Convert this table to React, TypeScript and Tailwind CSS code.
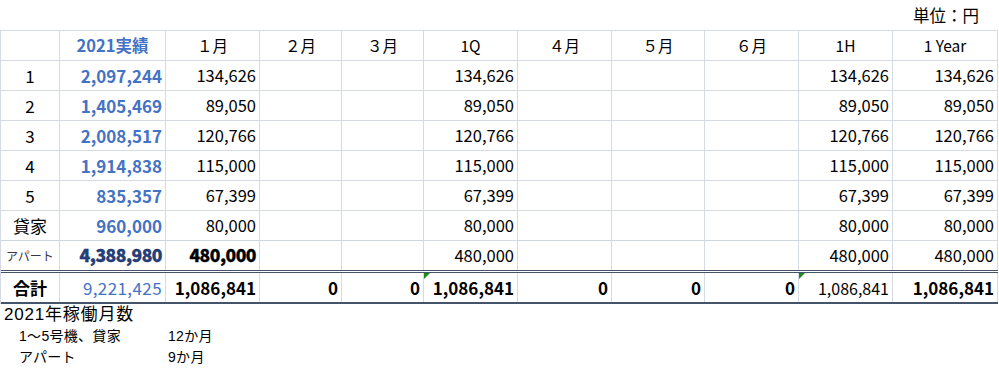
import { ReactNode } from "react";
import clsx from "clsx";

const widths = [
  "w-[59px]",
  "w-[106px]",
  "w-[94px]",
  "w-[82px]",
  "w-[82px]",
  "w-[94px]",
  "w-[94px]",
  "w-[93px]",
  "w-[94px]",
  "w-[94px]",
  "w-[105px]",
];

const headers = ["", "2021実績", "１月", "２月", "３月", "1Q", "４月", "５月", "６月", "1H", "1 Year"];

const rows = [
  { label: "1", base: "2,097,244", v: "134,626" },
  { label: "2", base: "1,405,469", v: "89,050" },
  { label: "3", base: "2,008,517", v: "120,766" },
  { label: "4", base: "1,914,838", v: "115,000" },
  { label: "5", base: "835,357", v: "67,399" },
  { label: "貸家", base: "960,000", v: "80,000" },
];

// columns whose bottom line under 貸家 is dashed
const dashedCols = [0, 1, 2, 3, 4, 6, 7, 8];

const Cell = ({
  i,
  children,
  className,
}: {
  i: number;
  children?: ReactNode;
  className?: string;
}) => (
  <div
    className={clsx(
      widths[i],
      "shrink-0 flex items-center border-r border-[#d5dae3] relative",
      className
    )}
  >
    {children}
  </div>
);

const Num = ({ children, className }: { children?: ReactNode; className?: string }) => (
  <span className={clsx("ml-auto pr-[3px]", className ?? "text-[16.5px]")}>{children}</span>
);

const Triangle = () => (
  <span className="absolute top-0 left-0 w-0 h-0 border-t-[6px] border-r-[6px] border-t-[#1a8a1a] border-r-transparent" />
);

export default function App() {
  return (
    <div className="w-[999px] h-[371px] bg-white text-black font-['Noto_Sans_CJK_JP','Noto_Sans',sans-serif] overflow-hidden">
      <div className="h-[30px] flex items-center justify-end pr-[20px] text-[16.5px]">単位：円</div>

      <div className="w-[998px] border-l border-t border-[#d5dae3]">
        {/* header */}
        <div className="flex h-[30px] border-b border-[#d5dae3]">
          {headers.map((h, i) => (
            <Cell key={i} i={i} className="justify-center">
              <span
                className={clsx(
                  i === 1 ? "font-bold text-[#4472c4] text-[16.5px]" : "text-[15.5px]"
                )}
              >
                {h}
              </span>
            </Cell>
          ))}
        </div>

        {rows.map((r, ri) => (
          <div key={r.label} className="flex h-[30px]">
            {headers.map((_, i) => (
              <Cell
                key={i}
                i={i}
                className={clsx(
                  "border-b",
                  ri === rows.length - 1 && dashedCols.includes(i)
                    ? "border-b-dashed border-b-[#cfd5df]"
                    : "border-b-[#d5dae3]",
                  i === 0 && "justify-center"
                )}
              >
                {i === 0 && <span className="text-[17px]">{r.label}</span>}
                {i === 1 && <Num className="font-bold text-[#4472c4] text-[17px]">{r.base}</Num>}
                {(i === 2 || i === 5 || i === 9 || i === 10) && <Num>{r.v}</Num>}
              </Cell>
            ))}
          </div>
        ))}

        {/* アパート */}
        <div className="flex h-[32px] border-b-[3px] border-double border-[#44546a]">
          {headers.map((_, i) => (
            <Cell key={i} i={i} className={clsx(i === 0 && "justify-center")}>
              {i === 0 && <span className="text-[12px] text-[#3a3346]">アパート</span>}
              {i === 1 && (
                <Num className="font-black text-[#22407e] text-[17.5px] tracking-[-0.5px] [-webkit-text-stroke:0.3px_#13264d]">
                  4,388,980
                </Num>
              )}
              {i === 2 && (
                <Num className="font-black text-[17.5px] tracking-[-0.5px] [-webkit-text-stroke:0.3px_#000]">
                  480,000
                </Num>
              )}
              {(i === 5 || i === 9 || i === 10) && <Num>480,000</Num>}
            </Cell>
          ))}
        </div>

        {/* 合計 */}
        <div className="flex h-[31px] border-b-2 border-[#44546a]">
          <Cell i={0} className="justify-center">
            <span className="font-bold text-[17px]">合計</span>
          </Cell>
          <Cell i={1}>
            <Num className="text-[#4472c4] text-[17px] tracking-[0.4px]">9,221,425</Num>
          </Cell>
          <Cell i={2}>
            <Num className="font-bold text-[17px]">1,086,841</Num>
          </Cell>
          <Cell i={3}>
            <Num className="font-bold text-[17px]">0</Num>
          </Cell>
          <Cell i={4}>
            <Num className="font-bold text-[17px]">0</Num>
          </Cell>
          <Cell i={5}>
            <Triangle />
            <Num className="font-bold text-[17px]">1,086,841</Num>
          </Cell>
          <Cell i={6}>
            <Num className="font-bold text-[17px]">0</Num>
          </Cell>
          <Cell i={7}>
            <Num className="font-bold text-[17px]">0</Num>
          </Cell>
          <Cell i={8}>
            <Num className="font-bold text-[17px]">0</Num>
          </Cell>
          <Cell i={9}>
            <Triangle />
            <Num className="text-[16px]">1,086,841</Num>
          </Cell>
          <Cell i={10}>
            <Num className="font-bold text-[17px]">1,086,841</Num>
          </Cell>
        </div>
      </div>

      {/* notes */}
      <div className="pl-[4px] font-['Liberation_Sans','Noto_Sans_CJK_JP',sans-serif]">
        <div className="h-[21px] leading-[21px] text-[17px] tracking-[0.8px]">2021年稼働月数</div>
        <div className="h-[22px] leading-[22px] flex pl-[15px] text-[14px] tracking-[0.3px]">
          <span className="w-[149px]">1～5号機、貸家</span>
          <span>12か月</span>
        </div>
        <div className="h-[21px] leading-[21px] flex pl-[15px] text-[14px] tracking-[0.3px]">
          <span className="w-[149px]">アパート</span>
          <span>9か月</span>
        </div>
      </div>
    </div>
  );
}
